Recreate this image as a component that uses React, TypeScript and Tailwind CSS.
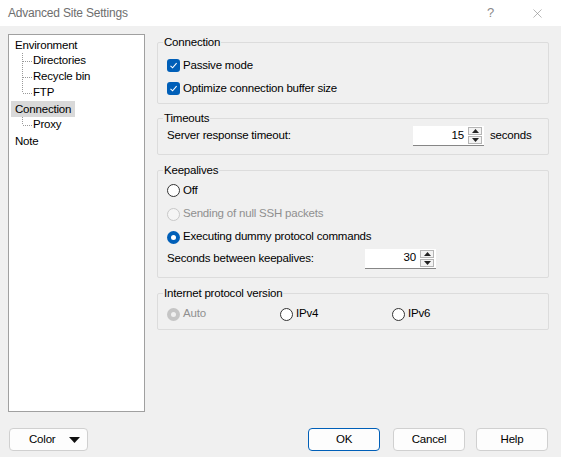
import { X } from "lucide-react";

function Check({ label }: { label: string }) {
  return (
    <div className="flex items-center h-[23px] pl-[9px]">
      <span className="w-[13px] h-[13px] rounded-[3px] bg-[#005fb8] flex items-center justify-center">
        <svg width="9" height="9" viewBox="0 0 9 9">
          <path d="M1.5 4.8 L3.6 6.8 L7.6 2.2" fill="none" stroke="white" strokeWidth="1.1" />
        </svg>
      </span>
      <span className="ml-[3px]">{label}</span>
    </div>
  );
}

function Radio({ label, state }: { label: string; state: "off" | "on" | "disabled" | "disabledOn" }) {
  let dot = <span className="w-[13px] h-[13px] rounded-full border border-[#333333] bg-white" />;
  if (state === "on")
    dot = (
      <span className="w-[13px] h-[13px] rounded-full bg-[#005fb8] flex items-center justify-center">
        <span className="w-[5px] h-[5px] rounded-full bg-white" />
      </span>
    );
  if (state === "disabled") dot = <span className="w-[13px] h-[13px] rounded-full border border-[#c8c8c8] bg-[#f5f5f5]" />;
  if (state === "disabledOn")
    dot = (
      <span className="w-[13px] h-[13px] rounded-full bg-[#c5c5c5] flex items-center justify-center">
        <span className="w-[5px] h-[5px] rounded-full bg-[#efefef]" />
      </span>
    );
  const dim = state === "disabled" || state === "disabledOn";
  return (
    <span className="flex items-center">
      {dot}
      <span className={`ml-[3px] ${dim ? "text-[#8f8f8f]" : ""}`}>{label}</span>
    </span>
  );
}

function Spin({ value }: { value: string }) {
  return (
    <div className="w-[71px] h-[20px] bg-white border-b border-[#868686] flex items-center justify-end pr-[2px]">
      <span className="mr-[4px]">{value}</span>
      <div className="flex flex-col gap-[1px]">
        <span className="w-[14px] h-[8px] border border-[#b5b5b5] bg-[#f3f3f3] flex items-center justify-center">
          <svg width="7" height="4" viewBox="0 0 7 4"><path d="M0 4 L3.5 0 L7 4 Z" fill="#222" /></svg>
        </span>
        <span className="w-[14px] h-[8px] border border-[#b5b5b5] bg-[#f3f3f3] flex items-center justify-center">
          <svg width="7" height="4" viewBox="0 0 7 4"><path d="M0 0 L3.5 4 L7 0 Z" fill="#222" /></svg>
        </span>
      </div>
    </div>
  );
}

function Group({ title, children, className }: { title: string; children: React.ReactNode; className?: string }) {
  return (
    <fieldset className={`border border-[#dcdcdc] rounded-[2px] px-0 ${className ?? ""}`}>
      <legend className="ml-[5px] px-[1px] h-4 leading-4">{title}</legend>
      {children}
    </fieldset>
  );
}

function Connector({ last }: { last?: boolean }) {
  return (
    <svg width="18" height="16" viewBox="0 0 18 16" className="shrink-0">
      <line x1="7.5" y1="0" x2="7.5" y2={last ? 8 : 16} stroke="#9a9a9a" strokeDasharray="1 1" />
      <line x1="8" y1="8.5" x2="17" y2="8.5" stroke="#9a9a9a" strokeDasharray="1 1" />
    </svg>
  );
}

const tree = [
  { label: "Environment", child: false },
  { label: "Directories", child: true },
  { label: "Recycle bin", child: true },
  { label: "FTP", child: true, last: true },
  { label: "Connection", child: false, selected: true },
  { label: "Proxy", child: true, last: true },
  { label: "Note", child: false },
];

export default function App() {
  return (
    <div
      className="w-[561px] h-[457px] bg-[#f0f0f0] overflow-hidden flex flex-col text-[11.5px] tracking-[-0.2px] text-black"
      style={{ fontFamily: '"Segoe UI", "Liberation Sans", Arial, sans-serif' }}
    >
      <div className="h-[26px] bg-white flex items-center shrink-0">
        <span className="ml-[8px] text-[#6e6e6e] text-[12px]">Advanced Site Settings</span>
        <span className="ml-auto mr-[36px] text-[#8a8a8a] text-[13px]">?</span>
        <X size={15} strokeWidth={1} className="mr-[16px] text-[#8a8a8a]" />
      </div>

      <div className="flex pt-[8px] pl-[8px] pr-[12px] gap-[12px]">
        <div className="w-[137px] h-[378px] bg-white border border-[#a0a0a0] pt-[2px] pl-[2px] shrink-0">
          {tree.map((t) => (
            <div key={t.label} className="flex items-center h-4">
              {t.child ? (
                <>
                  <span className="w-[4px]" />
                  <Connector last={t.last} />
                  <span>{t.label}</span>
                </>
              ) : (
                <span className={`px-[4px] leading-4 ${t.selected ? "bg-[#d9d9d9]" : ""}`}>{t.label}</span>
              )}
            </div>
          ))}
        </div>

        <div className="flex-1 flex flex-col">
          <Group title="Connection" className="pt-[4px] pb-[3px]">
            <Check label="Passive mode" />
            <Check label="Optimize connection buffer size" />
          </Group>

          <Group title="Timeouts" className="mt-[6px] pb-[8px]">
            <div className="flex items-center h-[20px] pl-[9px]">
              <span>Server response timeout:</span>
              <span className="ml-auto">
                <Spin value="15" />
              </span>
              <span className="ml-[6px] w-[58px]">seconds</span>
            </div>
          </Group>

          <Group title="Keepalives" className="mt-[7px] pt-[1px] pb-[8px]">
            <div className="flex items-center h-[23px] pl-[9px]">
              <Radio label="Off" state="off" />
            </div>
            <div className="flex items-center h-[24px] pl-[9px]">
              <Radio label="Sending of null SSH packets" state="disabled" />
            </div>
            <div className="flex items-center h-[22px] pl-[9px]">
              <Radio label="Executing dummy protocol commands" state="on" />
            </div>
            <div className="flex items-center h-[21px] pl-[9px]">
              <span className="w-[198px]">Seconds between keepalives:</span>
              <Spin value="30" />
            </div>
          </Group>

          <Group title="Internet protocol version" className="mt-[7px] pt-[1px] pb-[3px]">
            <div className="flex items-center h-[24px] pl-[9px]">
              <span className="w-[113px]">
                <Radio label="Auto" state="disabledOn" />
              </span>
              <span className="w-[112px]">
                <Radio label="IPv4" state="off" />
              </span>
              <Radio label="IPv6" state="off" />
            </div>
          </Group>
        </div>
      </div>

      <div className="flex items-center mt-[16px] pl-[9px] pr-[13px]">
        <button className="w-[79px] h-[23px] bg-[#fdfdfd] border border-[#d0d0d0] rounded-[4px] flex items-center pl-[19px] pr-[7px]">
          <span>Color</span>
          <svg width="11" height="6" viewBox="0 0 11 6" className="ml-auto">
            <path d="M0 0 L11 0 L5.5 6 Z" fill="#111" />
          </svg>
        </button>
        <button className="ml-auto w-[72px] h-[23px] bg-[#fdfdfd] border border-[#005fb8] rounded-[4px]">OK</button>
        <button className="ml-[13px] w-[72px] h-[23px] bg-[#fdfdfd] border border-[#d0d0d0] rounded-[4px]">Cancel</button>
        <button className="ml-[11px] w-[72px] h-[23px] bg-[#fdfdfd] border border-[#d0d0d0] rounded-[4px]">Help</button>
      </div>
    </div>
  );
}
